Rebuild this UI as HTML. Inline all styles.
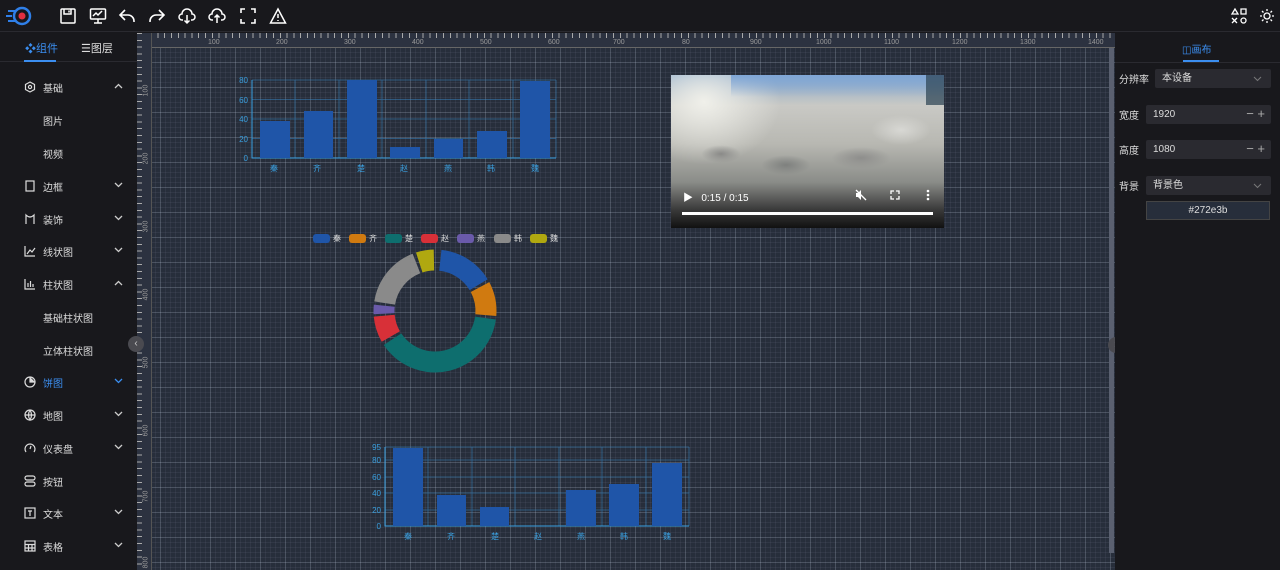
<!DOCTYPE html>
<html><head><meta charset="utf-8"><style>
*{margin:0;padding:0;box-sizing:border-box}
body{width:1280px;height:570px;overflow:hidden;background:#18181c;font-family:"Liberation Sans","Noto Sans CJK SC",sans-serif;color:#ddd;font-size:11px;position:relative}
.top{position:absolute;left:0;top:0;width:1280px;height:32px;background:#18181c;border-bottom:1px solid #2a2a30}
.top svg{position:absolute;top:7px}
.side{position:absolute;left:0;top:33px;width:137px;height:537px;background:#18181c}
.tabs{height:29px;border-bottom:1px solid #2a2a30;position:relative}
.tab{position:absolute;top:7px;font-size:11px}
.item{position:absolute;left:0;width:137px;height:20px;font-size:10px;color:#ddd}
.item .ic{position:absolute;left:24px;top:3px;width:12px;height:12px}
.item .t{position:absolute;left:43px;top:2px}
.item .ch{position:absolute;left:114px;top:5px;width:9px;height:6px}
.canvas{position:absolute;left:137px;top:33px;width:978px;height:537px;background-color:#272e3b;
background-image:linear-gradient(rgba(200,210,230,.17) 1px,transparent 1px),linear-gradient(90deg,rgba(200,210,230,.17) 1px,transparent 1px),linear-gradient(rgba(200,210,230,.06) 1px,transparent 1px),linear-gradient(90deg,rgba(200,210,230,.06) 1px,transparent 1px);
background-size:25px 25px,25px 25px,5px 5px,5px 5px;background-position:-2px 4px,-2px 4px,-2px 4px,-2px 4px}
.rulx{position:absolute;left:0;top:0;width:978px;height:15px;background:#2c3240;border-bottom:1px solid #666;
background-image:repeating-linear-gradient(90deg,#aaa 0 1px,transparent 1px 6.8px);background-size:100% 5px;background-repeat:no-repeat;background-position:0 0}
.ruly{position:absolute;left:0;top:0;width:15px;height:537px;background:#2c3240;border-right:1px solid #555;
background-image:repeating-linear-gradient(180deg,#aaa 0 1px,transparent 1px 6.8px);background-size:5px 100%;background-repeat:no-repeat}
.rl{position:absolute;font-size:7px;color:#999}
.rv{position:absolute;font-size:7px;color:#999;transform:rotate(-90deg)}
.right{position:absolute;left:1115px;top:33px;width:165px;height:537px;background:#18181c}
.fld{position:absolute;background:#2a2a30;height:19px;border-radius:2px;font-size:10px;color:#ddd;padding:2px 7px;line-height:15px}
.fld svg{position:absolute;right:9px;top:7px}
.pm{position:absolute;right:6px;top:1px;color:#aaa;font-size:13px;line-height:15px}
.lbl{position:absolute;left:4px;font-size:10px;color:#ddd}
.circ{position:absolute;width:16px;height:16px;border-radius:50%;background:#4a4a50;color:#ccc;font-size:10px;text-align:center;line-height:15px}
.blob{position:absolute;border-radius:50%}
</style></head><body>
<div class="top">
<svg style="left:6px;top:6px" width="26" height="20" viewBox="0 0 26 20"><circle cx="16" cy="10" r="8" fill="none" stroke="#2f7fe8" stroke-width="2.5"/><circle cx="16" cy="10" r="3.5" fill="#e23040"/><path d="M2 5h7M0 10h6M2 15h7" stroke="#2f7fe8" stroke-width="2"/></svg>
<svg style="left:59px" width="18" height="18" viewBox="0 0 18 18" fill="none" stroke="#fff" stroke-width="1.5"><rect x="2" y="2" width="14" height="14" rx="1"/><path d="M5 2v5h7V2M10 3.5v2"/></svg>
<svg style="left:89px" width="18" height="18" viewBox="0 0 18 18" fill="none" stroke="#fff" stroke-width="1.5"><rect x="1.5" y="2" width="15" height="10" rx="1"/><path d="M9 12v4M5 16h8M4 9l3-3 2 2 4-4"/></svg>
<svg style="left:118px" width="18" height="18" viewBox="0 0 18 18" fill="none" stroke="#fff" stroke-width="1.6"><path d="M7 3L2 8l5 5M2 8h8a6 6 0 0 1 6 6v1"/></svg>
<svg style="left:148px" width="18" height="18" viewBox="0 0 18 18" fill="none" stroke="#fff" stroke-width="1.6"><path d="M11 3l5 5-5 5M16 8H8a6 6 0 0 0-6 6v1"/></svg>
<svg style="left:178px" width="18" height="18" viewBox="0 0 18 18" fill="none" stroke="#fff" stroke-width="1.5"><path d="M5 13H4a3 3 0 0 1 0-6 5 5 0 0 1 10 0 3 3 0 0 1 0 6h-1M9 8v8M6.5 13.5L9 16l2.5-2.5"/></svg>
<svg style="left:208px" width="18" height="18" viewBox="0 0 18 18" fill="none" stroke="#fff" stroke-width="1.5"><path d="M5 13H4a3 3 0 0 1 0-6 5 5 0 0 1 10 0 3 3 0 0 1 0 6h-1M9 16V8M6.5 10.5L9 8l2.5 2.5"/></svg>
<svg style="left:239px" width="18" height="18" viewBox="0 0 18 18" fill="none" stroke="#fff" stroke-width="1.6"><path d="M2 6V2h4M12 2h4v4M16 12v4h-4M6 16H2v-4"/></svg>
<svg style="left:269px" width="18" height="18" viewBox="0 0 18 18" fill="none" stroke="#fff" stroke-width="1.5"><path d="M9 2L1.5 16h15z M9 7v4M9 13v1"/></svg>
<svg style="left:1230px" width="18" height="18" viewBox="0 0 18 18" fill="none" stroke="#fff" stroke-width="1.3"><path d="M5 2L2 7h6zM11 2h5v5h-5zM2 11l5 5M7 11l-5 5"/><circle cx="13.5" cy="13.5" r="2.5"/></svg>
<svg style="left:1259px" width="16" height="18" viewBox="0 0 16 18" fill="none" stroke="#fff" stroke-width="1.3"><circle cx="8" cy="9" r="3"/><path d="M8 2v2M8 14v2M1 9h2M13 9h2M3 4l1.5 1.5M11.5 12.5L13 14M3 14l1.5-1.5M11.5 5.5L13 4"/></svg>
</div>

<svg width="0" height="0" style="position:absolute"><defs>
<symbol id="dn" viewBox="0 0 9 6"><path d="M1 1l3.5 3.5L8 1" fill="none" stroke="#ccc" stroke-width="1.3"/></symbol>
<symbol id="up" viewBox="0 0 9 6"><path d="M1 5l3.5-3.5L8 5" fill="none" stroke="#ccc" stroke-width="1.3"/></symbol>
<symbol id="dnb" viewBox="0 0 9 6"><path d="M1 1l3.5 3.5L8 1" fill="none" stroke="#3b8ef0" stroke-width="1.3"/></symbol>
<symbol id="dng" viewBox="0 0 9 6"><path d="M1 1l3.5 3.5L8 1" fill="none" stroke="#777" stroke-width="1.1"/></symbol>
</defs></svg>

<div class="side">
<div class="tabs">
<div class="tab" style="left:25px;color:#3b8ef0">❖组件</div>
<div class="tab" style="left:81px">☰图层</div>
<div style="position:absolute;left:24px;top:27px;width:32px;height:2px;background:#3b8ef0"></div>
</div>
<div class="item" style="top:45px"><svg class="ic" viewBox="0 0 12 12" fill="none" stroke="#ddd" stroke-width="1.2"><path d="M6 1l4.5 2.5v5L6 11 1.5 8.5v-5z"/><circle cx="6" cy="6" r="1.6"/></svg><span class="t">基础</span><svg class="ch"><use href="#up"/></svg></div>
<div class="item" style="top:78px"><span class="t">图片</span></div>
<div class="item" style="top:111px"><span class="t">视频</span></div>
<div class="item" style="top:144px"><svg class="ic" viewBox="0 0 12 12" fill="none" stroke="#ddd" stroke-width="1.2"><rect x="2" y="1" width="8" height="10"/></svg><span class="t">边框</span><svg class="ch"><use href="#dn"/></svg></div>
<div class="item" style="top:177px"><svg class="ic" viewBox="0 0 12 12" fill="none" stroke="#ddd" stroke-width="1.2"><path d="M2 11V2q4 4 8 0v9"/></svg><span class="t">装饰</span><svg class="ch"><use href="#dn"/></svg></div>
<div class="item" style="top:209px"><svg class="ic" viewBox="0 0 12 12" fill="none" stroke="#ddd" stroke-width="1.2"><path d="M1 1v10h10M3 9l3-4 2 2 3-4"/></svg><span class="t">线状图</span><svg class="ch"><use href="#dn"/></svg></div>
<div class="item" style="top:242px"><svg class="ic" viewBox="0 0 12 12" fill="none" stroke="#ddd" stroke-width="1.2"><path d="M1 1v10h10M4 9V5M6.5 9V3M9 9V6"/></svg><span class="t">柱状图</span><svg class="ch"><use href="#up"/></svg></div>
<div class="item" style="top:275px"><span class="t">基础柱状图</span></div>
<div class="item" style="top:308px"><span class="t">立体柱状图</span></div>
<div class="item" style="top:340px;color:#3b8ef0"><svg class="ic" viewBox="0 0 12 12" fill="none" stroke="#ddd" stroke-width="1.2"><circle cx="6" cy="6" r="5"/><path d="M6 1v5h5" fill="#ddd"/></svg><span class="t">饼图</span><svg class="ch"><use href="#dnb"/></svg></div>
<div class="item" style="top:373px"><svg class="ic" viewBox="0 0 12 12" fill="none" stroke="#ddd" stroke-width="1.2"><circle cx="6" cy="6" r="5"/><path d="M1 6h10M6 1q-3 5 0 10q3-5 0-10"/></svg><span class="t">地图</span><svg class="ch"><use href="#dn"/></svg></div>
<div class="item" style="top:406px"><svg class="ic" viewBox="0 0 12 12" fill="none" stroke="#ddd" stroke-width="1.2"><path d="M2 10A5 5 0 1 1 10 10M6 7l1-3"/></svg><span class="t">仪表盘</span><svg class="ch"><use href="#dn"/></svg></div>
<div class="item" style="top:439px"><svg class="ic" viewBox="0 0 12 12" fill="none" stroke="#ddd" stroke-width="1.2"><rect x="1" y="1" width="10" height="4" rx="2"/><rect x="1" y="7" width="10" height="4" rx="2"/></svg><span class="t">按钮</span></div>
<div class="item" style="top:471px"><svg class="ic" viewBox="0 0 12 12" fill="none" stroke="#ddd" stroke-width="1.2"><rect x="1" y="1" width="10" height="10"/><path d="M4 4h4M6 4v5"/></svg><span class="t">文本</span><svg class="ch"><use href="#dn"/></svg></div>
<div class="item" style="top:504px"><svg class="ic" viewBox="0 0 12 12" fill="none" stroke="#ddd" stroke-width="1.2"><rect x="1" y="1" width="10" height="10"/><path d="M1 4.5h10M1 8h10M4.5 4.5V11M8 4.5V11"/></svg><span class="t">表格</span><svg class="ch"><use href="#dn"/></svg></div>
</div>

<div class="canvas">
<div class="rulx"></div>
<div class="ruly"></div>
<span class="rl" style="left:71px;top:6px">100</span><span class="rl" style="left:139px;top:6px">200</span><span class="rl" style="left:207px;top:6px">300</span><span class="rl" style="left:275px;top:6px">400</span><span class="rl" style="left:343px;top:6px">500</span><span class="rl" style="left:411px;top:6px">600</span><span class="rl" style="left:476px;top:6px">700</span><span class="rl" style="left:545px;top:6px">80</span><span class="rl" style="left:613px;top:6px">900</span><span class="rl" style="left:679px;top:6px">1000</span><span class="rl" style="left:747px;top:6px">1100</span><span class="rl" style="left:815px;top:6px">1200</span><span class="rl" style="left:883px;top:6px">1300</span><span class="rl" style="left:951px;top:6px">1400</span>
<span class="rv" style="left:3px;top:54px">100</span><span class="rv" style="left:3px;top:122px">200</span><span class="rv" style="left:3px;top:190px">300</span><span class="rv" style="left:3px;top:258px">400</span><span class="rv" style="left:3px;top:326px">500</span><span class="rv" style="left:3px;top:394px">600</span><span class="rv" style="left:3px;top:460px">700</span><span class="rv" style="left:3px;top:526px">800</span>
<div style="position:absolute;left:972px;top:15px;width:5px;height:505px;background:#5a6070"></div>
</div>

<svg style="position:absolute;left:230px;top:70px" width="340" height="110" viewBox="230 70 340 110" font-family="Liberation Sans,Noto Sans CJK SC,sans-serif" font-size="8">
<g stroke="#3a8fd0" stroke-width="0.8" opacity=".6"><path d="M252 80h304M252 99.5h304M252 119h304M252 138.5h304M295 80v78M339 80v78M382 80v78M426 80v78M469 80v78M513 80v78M556 80v78"/></g>
<path d="M252 80v78h304" stroke="#3aa0e0" fill="none"/>
<g fill="#1f55a8"><rect x="260" y="121" width="30" height="37"/><rect x="304" y="111" width="29" height="47"/><rect x="347" y="80" width="30" height="78"/><rect x="390" y="147" width="30" height="11"/><rect x="434" y="139" width="29" height="19"/><rect x="477" y="131" width="30" height="27"/><rect x="520" y="81" width="30" height="77"/></g>
<g fill="#3aa0e0" text-anchor="end"><text x="248" y="83">80</text><text x="248" y="103">60</text><text x="248" y="122">40</text><text x="248" y="142">20</text><text x="248" y="161">0</text></g>
<g fill="#3aa0e0" text-anchor="middle"><text x="274" y="171">秦</text><text x="317" y="171">齐</text><text x="361" y="171">楚</text><text x="404" y="171">赵</text><text x="448" y="171">燕</text><text x="491" y="171">韩</text><text x="535" y="171">魏</text></g>
</svg>

<svg style="position:absolute;left:360px;top:435px" width="340" height="110" viewBox="360 435 340 110" font-family="Liberation Sans,Noto Sans CJK SC,sans-serif" font-size="8">
<g stroke="#3a8fd0" stroke-width="0.8" opacity=".6"><path d="M385 447h304M385 460h304M385 477h304M385 493h304M385 510h304M428 447v79M472 447v79M515 447v79M559 447v79M602 447v79M646 447v79M689 447v79"/></g>
<path d="M385 447v79h304" stroke="#3aa0e0" fill="none"/>
<g fill="#1f55a8"><rect x="393" y="448" width="30" height="78"/><rect x="437" y="495" width="29" height="31"/><rect x="480" y="507" width="29" height="19"/><rect x="566" y="490" width="30" height="36"/><rect x="609" y="484" width="30" height="42"/><rect x="652" y="463" width="30" height="63"/></g>
<g fill="#3aa0e0" text-anchor="end"><text x="381" y="450">95</text><text x="381" y="463">80</text><text x="381" y="480">60</text><text x="381" y="496">40</text><text x="381" y="513">20</text><text x="381" y="529">0</text></g>
<g fill="#3aa0e0" text-anchor="middle"><text x="408" y="539">秦</text><text x="451" y="539">齐</text><text x="495" y="539">楚</text><text x="538" y="539">赵</text><text x="581" y="539">燕</text><text x="624" y="539">韩</text><text x="667" y="539">魏</text></g>
</svg>

<svg style="position:absolute;left:300px;top:225px" width="270" height="155" viewBox="300 225 270 155" font-family="Liberation Sans,Noto Sans CJK SC,sans-serif" font-size="8" fill="#ddd">
<g><rect x="313" y="234" width="17" height="9" rx="3" fill="#1f55a8"/><text x="333" y="241">秦</text>
<rect x="349" y="234" width="17" height="9" rx="3" fill="#d07a10"/><text x="369" y="241">齐</text>
<rect x="385" y="234" width="17" height="9" rx="3" fill="#0e6e6e"/><text x="405" y="241">楚</text>
<rect x="421" y="234" width="17" height="9" rx="3" fill="#d83038"/><text x="441" y="241">赵</text>
<rect x="457" y="234" width="17" height="9" rx="3" fill="#6a5aaa"/><text x="477" y="241">燕</text>
<rect x="494" y="234" width="17" height="9" rx="3" fill="#8a8a8a"/><text x="514" y="241">韩</text>
<rect x="530" y="234" width="17" height="9" rx="3" fill="#b0a810"/><text x="550" y="241">魏</text></g>
<g transform="translate(435,311) rotate(-90)" fill="none" stroke-width="21">
<circle r="51" stroke="#1f55a8" stroke-dasharray="47 400" transform="rotate(6)"/>
<circle r="51" stroke="#d07a10" stroke-dasharray="29 400" transform="rotate(62)"/>
<circle r="51" stroke="#0e6e6e" stroke-dasharray="123 400" transform="rotate(98)"/>
<circle r="51" stroke="#d83038" stroke-dasharray="22 400" transform="rotate(240)"/>
<circle r="51" stroke="#6a5aaa" stroke-dasharray="8 400" transform="rotate(267)"/>
<circle r="51" stroke="#8a8a8a" stroke-dasharray="53 400" transform="rotate(279)"/>
<circle r="51" stroke="#b0a810" stroke-dasharray="15 400" transform="rotate(342)"/>
</g>
</svg>

<div style="position:absolute;left:671px;top:75px;width:273px;height:153px;overflow:hidden;background:linear-gradient(180deg,#8aa8c8 0%,#c9c9c5 20%,#b8b8b2 45%,#8a8c88 70%,#3a3a3a 88%,#111 100%)">
<div style="position:absolute;left:0;top:0;width:110px;height:90px;background:radial-gradient(ellipse at 30% 30%,#f0f0ea,rgba(230,230,225,0) 70%)"></div>
<div style="position:absolute;left:60px;top:0;width:215px;height:22px;background:linear-gradient(180deg,#7fa6d6,rgba(150,175,205,0))"></div>
<div style="position:absolute;left:255px;top:0;width:20px;height:30px;background:#2a4050;opacity:.7"></div>
<div class="blob" style="left:30px;top:70px;width:40px;height:18px;background:radial-gradient(#8a8a88,rgba(138,138,136,0) 70%)"></div>
<div class="blob" style="left:90px;top:80px;width:50px;height:20px;background:radial-gradient(#7e807e,rgba(126,128,126,0) 70%)"></div>
<div class="blob" style="left:160px;top:72px;width:60px;height:22px;background:radial-gradient(#8e8e8c,rgba(142,142,140,0) 70%)"></div>
<div class="blob" style="left:200px;top:40px;width:60px;height:30px;background:radial-gradient(#d8d8d4,rgba(216,216,212,0) 70%)"></div>
<span style="position:absolute;left:12px;top:114px;font-size:10px;color:#fff">▶&nbsp;&nbsp;&nbsp;0:15 / 0:15</span>
<svg style="position:absolute;left:184px;top:114px" width="12" height="12" viewBox="0 0 12 12"><path d="M1 4h2l3-3v10L3 8H1z" fill="#fff"/><path d="M1 1l10 10" stroke="#fff" stroke-width="1.3"/></svg>
<svg style="position:absolute;left:219px;top:115px" width="10" height="10" viewBox="0 0 10 10" fill="none" stroke="#fff" stroke-width="1.3"><path d="M1 4V1h3M6 1h3v3M9 6v3H6M4 9H1V6"/></svg>
<svg style="position:absolute;left:255px;top:114px" width="4" height="12" viewBox="0 0 4 12" fill="#fff"><circle cx="2" cy="2" r="1.3"/><circle cx="2" cy="6" r="1.3"/><circle cx="2" cy="10" r="1.3"/></svg>
<div style="position:absolute;left:11px;top:137px;width:251px;height:3px;background:#fff"></div>
</div>

<div class="circ" style="left:128px;top:336px">‹</div>
<div class="circ" style="left:1108px;top:337px">›</div>

<div class="right">
<div style="position:absolute;left:67px;top:8px;font-size:10px;color:#3b8ef0">◫画布</div>
<div style="position:absolute;left:68px;top:27px;width:36px;height:2px;background:#3b8ef0"></div>
<div style="position:absolute;left:0;top:29px;width:165px;height:1px;background:#2a2a30"></div>
<div class="lbl" style="top:38px">分辨率</div>
<div class="fld" style="left:40px;top:36px;width:116px">本设备<svg width="9" height="6"><use href="#dng"/></svg></div>
<div class="lbl" style="top:74px">宽度</div>
<div class="fld" style="left:31px;top:72px;width:125px">1920<span class="pm">− +</span></div>
<div class="lbl" style="top:109px">高度</div>
<div class="fld" style="left:31px;top:107px;width:125px">1080<span class="pm">− +</span></div>
<div class="lbl" style="top:145px">背景</div>
<div class="fld" style="left:31px;top:143px;width:125px">背景色<svg width="9" height="6"><use href="#dng"/></svg></div>
<div style="position:absolute;left:31px;top:168px;width:124px;height:19px;border:1px solid #444;background:#272e3b;text-align:center;font-size:10px;color:#ddd;line-height:17px">#272e3b</div>
</div>
</body></html>
